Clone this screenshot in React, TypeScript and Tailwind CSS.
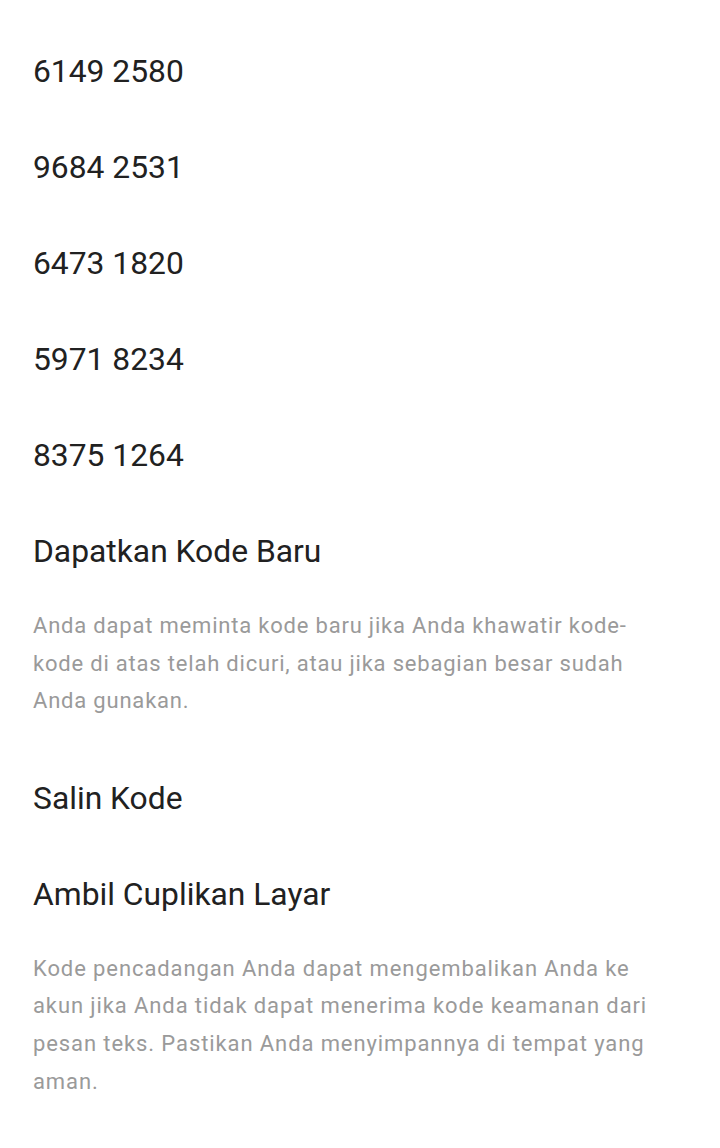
import React from "react";

const codes = ["6149 2580", "9684 2531", "6473 1820", "5971 8234", "8375 1264"];

const Row: React.FC<{ children: React.ReactNode }> = ({ children }) => (
  <div className="h-[96px] flex items-center px-[33px] text-[31.8px] text-[#212121]">
    {children}
  </div>
);

const Note: React.FC<{ children: React.ReactNode; wide?: boolean }> = ({ children, wide }) => (
  <p
    className={
      "pl-[33px] pr-[55px] pt-[7px] text-[22px] leading-[37.6px] text-[#9a9a9a] " +
      (wide ? "tracking-[0.9px]" : "tracking-[0.8px]")
    }
  >
    {children}
  </p>
);

export default function App() {
  return (
    <div className="min-h-[1148px] bg-white pt-[24px] font-['Roboto',sans-serif]">
      {codes.map((c) => (
        <Row key={c}>{c}</Row>
      ))}
      <Row>Dapatkan Kode Baru</Row>
      <Note>
        Anda dapat meminta kode baru jika Anda khawatir kode-kode di atas telah dicuri, atau jika
        sebagian besar sudah Anda gunakan.
      </Note>
      <div className="h-[31px]" />
      <Row>Salin Kode</Row>
      <Row>Ambil Cuplikan Layar</Row>
      <Note wide>
        Kode pencadangan Anda dapat mengembalikan Anda ke akun jika Anda tidak dapat menerima kode
        keamanan dari pesan teks. Pastikan Anda menyimpannya di tempat yang aman.
      </Note>
    </div>
  );
}
